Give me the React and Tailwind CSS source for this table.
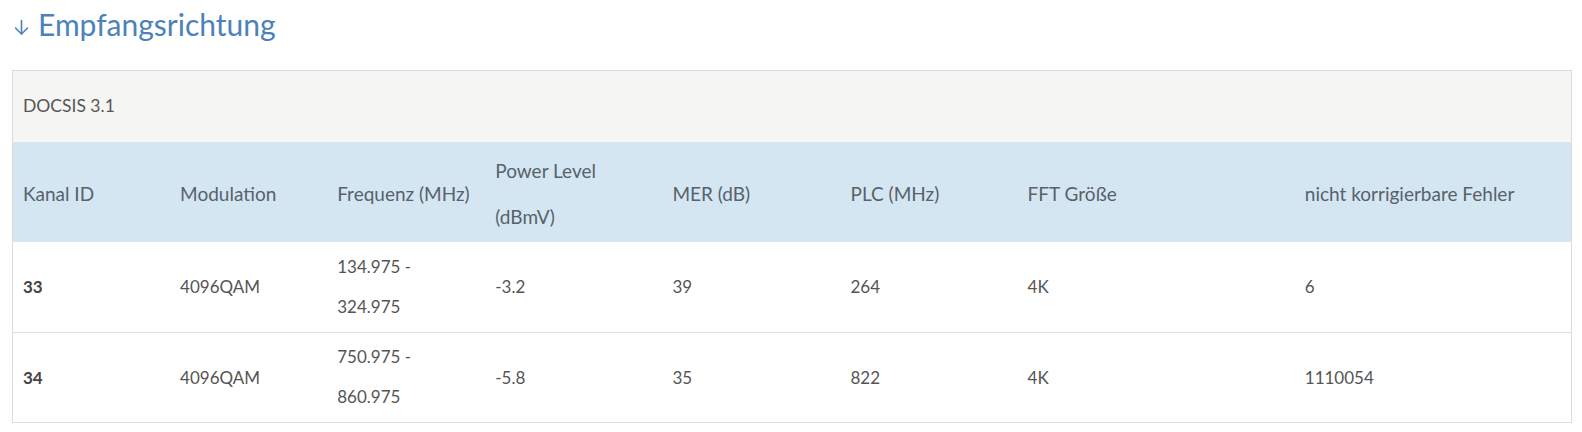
import React from "react";

const cols = [157, 157, 158, 177, 178, 177, 277, 276];

const rows = [
  { id: "33", mod: "4096QAM", f1: "134.975 -", f2: "324.975", pl: "-3.2", mer: "39", plc: "264", fft: "4K", err: "6" },
  { id: "34", mod: "4096QAM", f1: "750.975 -", f2: "860.975", pl: "-5.8", mer: "35", plc: "822", fft: "4K", err: "1110054" },
];

const heads = ["Kanal ID", "Modulation", "Frequenz (MHz)", null, "MER (dB)", "PLC (MHz)", "FFT Größe", "nicht korrigierbare Fehler"];

export default function App() {
  return (
    <div className="bg-white w-[1582px] h-[432px] pl-[12px] pt-[4px]" style={{ fontFamily: "Lato, 'Liberation Sans', sans-serif" }}>
      <h2 className="flex items-center h-[40px] text-[#4c82b9] text-[30px] leading-[40px] font-normal">
        <svg width="17" height="17" viewBox="0 0 17 17" className="mt-[7px] mr-[8px] ml-[1px]" fill="none" stroke="#4c82b9" strokeWidth="1.6" strokeLinecap="round" strokeLinejoin="round">
          <path d="M8.5 1.5 V15" />
          <path d="M2.5 9 L8.5 15 L14.5 9" />
        </svg>
        <span>Empfangsrichtung</span>
      </h2>
      <div className="mt-[26px] w-[1560px] border border-[#dcdcdc]">
        <div className="h-[71px] bg-[#f5f5f3] flex items-center pl-[10px] text-[17.5px] text-[#555]">DOCSIS 3.1</div>
        <table className="w-full table-fixed border-collapse text-[17px]">
          <colgroup>
            {cols.map((w, i) => (
              <col key={i} style={{ width: w }} />
            ))}
          </colgroup>
          <thead>
            <tr className="bg-[#d5e6f3] text-[#57626b] h-[100px] text-[19px]">
              {heads.map((h, i) =>
                h === null ? (
                  <th key={i} className="font-normal text-left align-middle pl-[10px] pt-[4px] leading-[46px]">
                    Power Level
                    <br />
                    (dBmV)
                  </th>
                ) : (
                  <th key={i} className="font-normal text-left align-middle pl-[10px] pt-[4px]">
                    {h}
                  </th>
                )
              )}
            </tr>
          </thead>
          <tbody className="text-[#555]">
            {rows.map((r, i) => (
              <tr key={r.id} className={i === 0 ? "h-[90px] border-b border-[#e0e0e0]" : "h-[90px]"}>
                <td className="pl-[10px] font-bold text-[#444]">{r.id}</td>
                <td className="pl-[10px]">{r.mod}</td>
                <td className="pl-[10px] leading-[40px]">
                  {r.f1}
                  <br />
                  {r.f2}
                </td>
                <td className="pl-[10px]">{r.pl}</td>
                <td className="pl-[10px]">{r.mer}</td>
                <td className="pl-[10px]">{r.plc}</td>
                <td className="pl-[10px]">{r.fft}</td>
                <td className="pl-[10px]">{r.err}</td>
              </tr>
            ))}
          </tbody>
        </table>
      </div>
    </div>
  );
}
